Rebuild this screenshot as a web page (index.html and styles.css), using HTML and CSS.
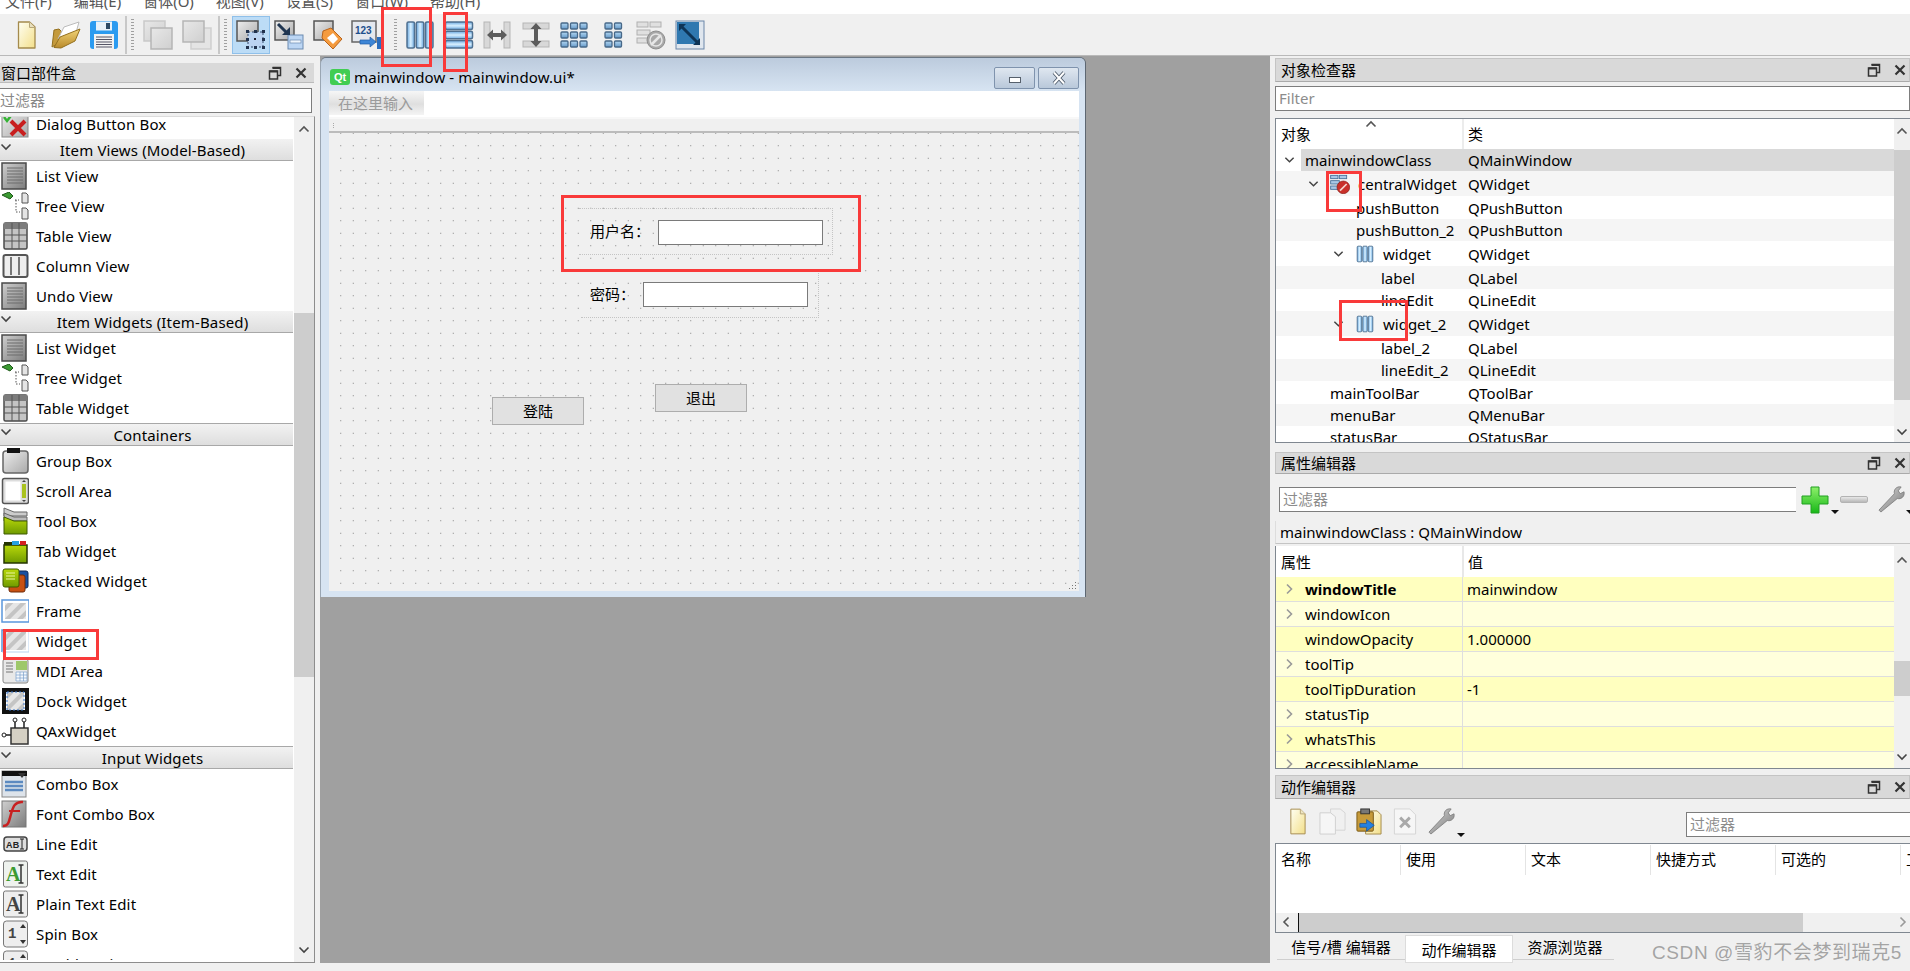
FILE: index.html
```html
<!DOCTYPE html>
<html lang="zh">
<head>
<meta charset="utf-8">
<title>Qt Designer</title>
<link rel="stylesheet" href="styles.css">
</head>
<body>
<svg class="defs" width="0" height="0" aria-hidden="true">
  <defs>
    <linearGradient id="gBlue" x1="0" y1="0" x2="1" y2="0"><stop offset="0" stop-color="#6aa8e0"/><stop offset=".5" stop-color="#d8f0ff"/><stop offset="1" stop-color="#6aa8e0"/></linearGradient>
    <linearGradient id="gBlueV" x1="0" y1="0" x2="0" y2="1"><stop offset="0" stop-color="#6aa8e0"/><stop offset=".5" stop-color="#d8f0ff"/><stop offset="1" stop-color="#6aa8e0"/></linearGradient>
    <linearGradient id="gCell" x1="0" y1="0" x2="0" y2="1"><stop offset="0" stop-color="#b4d8f2"/><stop offset="1" stop-color="#6498c8"/></linearGradient>
    <linearGradient id="gGray" x1="0" y1="0" x2="1" y2="1"><stop offset="0" stop-color="#ededed"/><stop offset="1" stop-color="#a9a9a9"/></linearGradient>
    <linearGradient id="gList" x1="0" y1="0" x2="1" y2="1"><stop offset="0" stop-color="#cfcfcf"/><stop offset="1" stop-color="#7c7c7c"/></linearGradient>
    <linearGradient id="gPale" x1="0" y1="0" x2="1" y2="1"><stop offset="0" stop-color="#e8e8e8"/><stop offset="1" stop-color="#cfcfcf"/></linearGradient>
    <linearGradient id="gGreen" x1="0" y1="0" x2="0" y2="1"><stop offset="0" stop-color="#b9d80a"/><stop offset="1" stop-color="#6f9a00"/></linearGradient>
    <linearGradient id="gFile" x1="0" y1="0" x2="1" y2="1"><stop offset="0" stop-color="#fffff2"/><stop offset="1" stop-color="#f3df8a"/></linearGradient>
    <linearGradient id="gGold" x1="0" y1="0" x2="0" y2="1"><stop offset="0" stop-color="#f2d478"/><stop offset="1" stop-color="#b98a2a"/></linearGradient>
    <linearGradient id="gPlus" x1="0" y1="0" x2="0" y2="1"><stop offset="0" stop-color="#8df06a"/><stop offset="1" stop-color="#18b818"/></linearGradient>
    <linearGradient id="gSteel" x1="0" y1="0" x2="1" y2="1"><stop offset="0" stop-color="#dcdcdc"/><stop offset="1" stop-color="#767676"/></linearGradient>
    <pattern id="hatch" width="9" height="9" patternUnits="userSpaceOnUse" patternTransform="rotate(-45)"><rect width="9" height="9" fill="#e6e6e6"/><rect width="9" height="4" fill="#c4c4c4"/></pattern>

    <symbol id="chevD" viewBox="0 0 12 8"><path d="M1.5 1.5 6 6l4.500-4.500" fill="none" stroke="#444" stroke-width="1.600"/></symbol>
    <symbol id="chevU" viewBox="0 0 12 8"><path d="M1.500 6.500 6 2l4.500 4.500" fill="none" stroke="#555" stroke-width="1.600"/></symbol>
    <symbol id="chevR" viewBox="0 0 8 12"><path d="M1.500 1.500 6 6l-4.500 4.500" fill="none" stroke="#999" stroke-width="1.600"/></symbol>
    <symbol id="chevL" viewBox="0 0 8 12"><path d="M6.500 1.500 2 6l4.500 4.500" fill="none" stroke="#555" stroke-width="1.600"/></symbol>
    <symbol id="float" viewBox="0 0 14 14"><path d="M4.500 1.500h8v8h-3M1.500 5h8v8h-8z" fill="none" stroke="#333" stroke-width="1.500"/><path d="M4.500 1h8v2h-8zM1.500 4.500h8v2h-8z" fill="#333"/></symbol>
    <symbol id="close" viewBox="0 0 12 12"><path d="M1.500 1.500l9 9m0-9-9 9" stroke="#333" stroke-width="2.200"/></symbol>

    <symbol id="new" viewBox="0 0 30 30"><path d="M6.500 2h11l5.500 5v21H6.500z" fill="url(#gFile)" stroke="#a48a4c" stroke-width="1.300" stroke-linejoin="round"/><path d="M17.500 2v5.500H23" fill="#e8e0c0" stroke="#b8a878"/></symbol>
    <symbol id="open" viewBox="0 0 30 30"><path d="M1 27 3 10l5-1 3 3 10-2v6z" fill="#c49a3c" stroke="#94701e"/><path d="M7 19 13 7l15-5-4 14z" fill="#fff" stroke="#bbb"/><path d="M3 27.500 9 17l20-8-5 12-14 7z" fill="url(#gGold)" stroke="#94701e"/></symbol>
    <symbol id="save" viewBox="0 0 30 30"><rect x="1" y="1" width="28" height="28" rx="3" fill="#2b9bf0"/><rect x="7" y="1.500" width="16" height="9" fill="#e8f2fa"/><rect x="17" y="3" width="4" height="6" fill="#2c4a66"/><rect x="5" y="14" width="20" height="15" fill="#f2f2f2"/><path d="M7 17h16M7 19.500h16M7 22h16M7 24.500h16M7 27h16" stroke="#556" stroke-width="1"/></symbol>
    <symbol id="copy" viewBox="0 0 30 30"><rect x="1" y="1" width="21" height="20" fill="url(#gPale)" stroke="#c9c9c9" stroke-width="1.500"/><rect x="8" y="8" width="21" height="21" fill="url(#gPale)" stroke="#b5b5b5" stroke-width="1.500"/></symbol>
    <symbol id="paste" viewBox="0 0 30 30"><rect x="9" y="8" width="20" height="21" fill="#e4e4e4" stroke="#cfcfcf" stroke-width="1.500"/><rect x="1" y="1" width="21" height="21" fill="url(#gPale)" stroke="#b5b5b5" stroke-width="1.500"/></symbol>
    <symbol id="edit" viewBox="0 0 30 30"><rect x="1" y="1" width="21" height="20" fill="url(#gGray)" stroke="#555" stroke-width="1.500"/><rect x="12" y="12" width="15" height="15" fill="#bcd4f2" stroke="#33496a" stroke-dasharray="2 2"/><rect x="18" y="18" width="2" height="2" fill="#223"/><path d="M10 10h3v3h-3zM18 10h3v3h-3zM26 10h3v3h-3zM26 18h3v3h-3zM26 26h3v3h-3zM18 26h3v3h-3zM10 26h3v3h-3zM10 18h3v3h-3z" fill="#23334e"/></symbol>
    <symbol id="signal" viewBox="0 0 30 30"><rect x="1" y="1" width="19" height="19" fill="url(#gGray)" stroke="#555" stroke-width="1.500"/><rect x="14" y="15" width="15" height="14" fill="#bcd6f4" stroke="#6a8ab0"/><rect x="16" y="20" width="11" height="3" fill="#eef5fc" stroke="#6a8ab0" stroke-width=".7"/><path d="M4 4l10 10" stroke="#1f3550" stroke-width="3"/><path d="M8 15h8V7z" fill="#1f3550"/></symbol>
    <symbol id="buddy" viewBox="0 0 30 30"><rect x="1" y="1" width="19" height="19" fill="url(#gGray)" stroke="#555" stroke-width="1.500"/><path d="M10 11 18 8 29 19l-9 10L9 18z" fill="#f59b3e" stroke="#b9641c"/><path d="M20 13l5 6-5 5-6-6z" fill="#fff"/></symbol>
    <symbol id="taborder" viewBox="0 0 30 30"><rect x="1" y="1" width="24" height="21" fill="#e4e8ee" stroke="#666" stroke-width="1.500"/><text x="4" y="14" class="svgtxt">123</text><path d="M9 20h10v-3l6 5-6 5v-3H9z" fill="#3e86d6" stroke="#1f5da8" stroke-width=".7"/><rect x="26" y="17" width="4" height="12" fill="#2a6fc0"/></symbol>
    <symbol id="hlay" viewBox="0 0 30 30"><g fill="url(#gBlue)" stroke="#4f7090" stroke-width="1.500"><rect x="2" y="2" width="7.500" height="26" rx="1.500"/><rect x="11.300" y="2" width="7.500" height="26" rx="1.500"/><rect x="20.500" y="2" width="7.500" height="26" rx="1.500"/></g></symbol>
    <symbol id="vlay" viewBox="0 0 30 30"><g fill="url(#gBlueV)" stroke="#4f7090" stroke-width="1.500"><rect x="1.500" y="2" width="27" height="7.500" rx="1.500"/><rect x="1.500" y="11.300" width="27" height="7.500" rx="1.500"/><rect x="1.500" y="20.500" width="27" height="7.500" rx="1.500"/></g></symbol>
    <symbol id="splith" viewBox="0 0 30 30"><rect x="2" y="2" width="6" height="26" fill="#d8d8d8" stroke="#b5b5b5"/><rect x="22" y="2" width="6" height="26" fill="#d8d8d8" stroke="#b5b5b5"/><path d="M5 15l6-5.500V13h8V9.500l6 5.500-6 5.500V17h-8v3.500z" fill="#5c5c5c"/></symbol>
    <symbol id="splitv" viewBox="0 0 30 30"><rect x="2" y="3" width="26" height="6" fill="#d8d8d8" stroke="#b5b5b5"/><rect x="2" y="21" width="26" height="6" fill="#d8d8d8" stroke="#b5b5b5"/><path d="M15 3l5.500 6H17v12h3.500L15 27l-5.500-6H13V9H9.500z" fill="#5c5c5c"/></symbol>
    <symbol id="grid" viewBox="0 0 30 30"><g fill="url(#gCell)" stroke="#476888" stroke-width="1.300"><rect x="2" y="3" width="7" height="6" rx="1"/><rect x="11.500" y="3" width="7" height="6" rx="1"/><rect x="21" y="3" width="7" height="6" rx="1"/><rect x="2" y="12" width="7" height="6" rx="1"/><rect x="11.500" y="12" width="7" height="6" rx="1"/><rect x="21" y="12" width="7" height="6" rx="1"/><rect x="2" y="21" width="7" height="6" rx="1"/><rect x="11.500" y="21" width="7" height="6" rx="1"/><rect x="21" y="21" width="7" height="6" rx="1"/></g></symbol>
    <symbol id="form" viewBox="0 0 30 30"><g fill="url(#gCell)" stroke="#476888" stroke-width="1.300"><rect x="7" y="3" width="7" height="6" rx="1"/><rect x="16.500" y="3" width="7" height="6" rx="1"/><rect x="7" y="12" width="7" height="6" rx="1"/><rect x="16.500" y="12" width="7" height="6" rx="1"/><rect x="7" y="21" width="7" height="6" rx="1"/><rect x="16.500" y="21" width="7" height="6" rx="1"/></g></symbol>
    <symbol id="break" viewBox="0 0 30 30"><g fill="#e0e0e0" stroke="#b0b0b0"><rect x="1" y="2" width="11" height="5"/><rect x="14" y="2" width="11" height="5"/><rect x="1" y="10" width="13" height="5"/><rect x="1" y="18" width="13" height="5"/></g><circle cx="20" cy="20" r="9" fill="#a8a8a8" stroke="#8d8d8d"/><path d="M15 25l10-10" stroke="#e6e6e6" stroke-width="2.500"/><circle cx="20" cy="20" r="6" fill="none" stroke="#e6e6e6" stroke-width="1.500"/></symbol>
    <symbol id="breakred" viewBox="0 0 30 30"><g fill="#a9c8e6" stroke="#456d96" stroke-width="1.300"><rect x="1" y="2" width="11" height="5"/><rect x="14" y="2" width="11" height="5"/><rect x="1" y="10" width="13" height="5"/><rect x="1" y="18" width="13" height="5"/></g><circle cx="20" cy="20" r="9.500" fill="#c9302a" stroke="#8a1c18"/><path d="M15 25l10-10" stroke="#f6d8d0" stroke-width="2.500"/></symbol>
    <symbol id="adjust" viewBox="0 0 30 30"><rect x="1" y="1" width="28" height="28" fill="#dfe6ee" stroke="#6a86a8"/><rect x="2" y="2" width="22" height="22" fill="#2f78b0"/><path d="M6 6l17 17" stroke="#0e3456" stroke-width="3"/><path d="M4 11V4h7zM25 18v7h-7z" fill="#0e3456"/></symbol>

    <symbol id="i-dialog" viewBox="0 0 28 28"><rect x="1" y="1" width="26" height="26" fill="url(#gGray)" stroke="#888"/><path d="M3 7l3 4 6-8" fill="none" stroke="#34b334" stroke-width="2.500"/><path d="M10 11l14 14m0-14L10 25" stroke="#c81e1e" stroke-width="4"/></symbol>
    <symbol id="i-list" viewBox="0 0 28 28"><rect x="1" y="1" width="24" height="26" fill="url(#gList)" stroke="#4a4a4a" stroke-width="1.500"/><path d="M6 6h16M6 9h16M6 12h16M6 15h16M6 18h16M6 21h16" stroke="#6c6c6c"/></symbol>
    <symbol id="i-tree" viewBox="0 0 28 28"><path d="M1 3l7-3 4 4-3 3z" fill="#3b9a32" stroke="#1f5a1a"/><path d="M14 8h4M15 8v12h4" fill="none" stroke="#555" stroke-dasharray="1.500 1.500"/><path d="M21 1h4l2 2v8h-6zM21 16h4l2 2v9h-6z" fill="#e4e4e4" stroke="#555"/></symbol>
    <symbol id="i-table" viewBox="0 0 28 28"><rect x="3" y="1" width="23" height="26" rx="1.500" fill="#c4c4c4" stroke="#4a4a4a" stroke-width="1.500"/><rect x="3" y="1" width="23" height="6" fill="#7c7c7c"/><path d="M3 13h23M3 19h23M11 1v26M18 1v26" stroke="#555"/></symbol>
    <symbol id="i-column" viewBox="0 0 28 28"><rect x="2.500" y="3" width="24" height="22" rx="2" fill="#eee" stroke="#555" stroke-width="2"/><path d="M10 5v18M18 5v18" stroke="#777" stroke-width="2"/></symbol>
    <symbol id="i-group" viewBox="0 0 28 28"><rect x="2" y="4" width="25" height="22" rx="3" fill="url(#gGray)" stroke="#666" stroke-width="1.500"/><rect x="6" y="1" width="13" height="5" fill="#111"/></symbol>
    <symbol id="i-scroll" viewBox="0 0 28 28"><rect x="1.500" y="1.500" width="26" height="25" rx="2" fill="#ddd" stroke="#555" stroke-width="1.500"/><rect x="4.500" y="4.500" width="15" height="19" fill="#fff"/><rect x="21" y="7" width="4" height="14" fill="#a9c21e"/><path d="M21 5h4l-2-2zM21 23h4l-2 2z" fill="#444"/></symbol>
    <symbol id="i-toolbox" viewBox="0 0 28 28"><path d="M3 1l10 4h13v4H3z" fill="#ccc" stroke="#666"/><path d="M3 6l10 4h13v4H3z" fill="#bbb" stroke="#666"/><path d="M3 10l10 4h13v13H3z" fill="url(#gGreen)" stroke="#3f5a00"/></symbol>
    <symbol id="i-tab" viewBox="0 0 28 28"><rect x="3" y="8" width="23" height="18" fill="url(#gGreen)" stroke="#253400" stroke-width="1.500"/><rect x="11" y="4" width="7" height="4" fill="#27a0e0"/><rect x="19" y="4" width="6" height="4" fill="#d42020"/><rect x="3" y="5" width="8" height="3" fill="#253400"/></symbol>
    <symbol id="i-stack" viewBox="0 0 28 28"><rect x="14" y="4" width="13" height="17" rx="2" fill="#1a4fa0" stroke="#102a58"/><rect x="8" y="8" width="16" height="17" rx="2" fill="#c85012" stroke="#6e2a08"/><rect x="2" y="2" width="16" height="18" rx="2" fill="url(#gGreen)" stroke="#3f5a00"/><path d="M5 6h9M5 9h9M5 12h9" stroke="#eaf6a0"/></symbol>
    <symbol id="i-frame" viewBox="0 0 28 28"><rect x="1" y="3" width="27" height="22" fill="#fff" stroke="#5a96dc" stroke-width="1.500"/><rect x="4" y="6" width="21" height="16" fill="url(#hatch)"/></symbol>
    <symbol id="i-widget" viewBox="0 0 28 28"><path d="M1 25V3h5" fill="none" stroke="#5a96dc" stroke-width="1.500"/><path d="M1 25h27V3H6" fill="none" stroke="#b8d2ee"/><rect x="4" y="5" width="21" height="18" fill="url(#hatch)"/></symbol>
    <symbol id="i-mdi" viewBox="0 0 28 28"><rect x="2" y="2" width="25" height="24" rx="2" fill="#e8e8e8" stroke="#888"/><rect x="15" y="4" width="11" height="9" fill="#9ec86a"/><path d="M15 15h11v9H15zM15 18h11M15 21h11M19 15v9M22.500 15v9" fill="#f4f8fc" stroke="#7ba0cc" stroke-width=".7"/><path d="M5 6h7M5 9h7M5 12h7M5 15h7" stroke="#777"/></symbol>
    <symbol id="i-dock" viewBox="0 0 28 28"><rect x="1" y="1" width="27" height="4" fill="#111"/><rect x="1" y="23" width="27" height="4" fill="#111"/><rect x="1" y="5" width="4" height="18" fill="#111"/><rect x="24" y="5" width="4" height="18" fill="#111"/><rect x="6" y="5" width="17" height="18" fill="url(#hatch)" stroke="#3a78d0" stroke-dasharray="2 2"/></symbol>
    <symbol id="i-qax" viewBox="0 0 28 28"><rect x="10" y="11" width="17" height="16" fill="#d5d0c4" stroke="#333" stroke-width="1.500"/><path d="M14 11V4M23 11V4M1 18h9" stroke="#222" stroke-width="1.500"/><circle cx="14" cy="3" r="2" fill="#fff" stroke="#222"/><circle cx="23" cy="3" r="2" fill="#fff" stroke="#222"/><circle cx="3" cy="18" r="2" fill="#fff" stroke="#222"/></symbol>
    <symbol id="i-combo" viewBox="0 0 28 28"><rect x="1" y="1" width="24" height="26" fill="#dde3ea" stroke="#888"/><rect x="1" y="1" width="25" height="5" fill="#111"/><path d="M17 3h8l-4 5z" fill="#333"/><path d="M4 12h18M4 16h18M4 20h18" stroke="#5c8ac0" stroke-width="2.500"/></symbol>
    <symbol id="i-font" viewBox="0 0 28 28"><rect x="1" y="1" width="24" height="26" fill="url(#gList)" stroke="#777"/><path d="M2 26c6 0 6-5 8-12s4-13 12-12" fill="none" stroke="#c82020" stroke-width="2.500"/><path d="M8 11h11" stroke="#c82020" stroke-width="2"/></symbol>
    <symbol id="i-line" viewBox="0 0 28 28"><rect x="3" y="7" width="23" height="14" rx="3" fill="#ddd" stroke="#444" stroke-width="1.500"/><text x="5" y="18" class="svgtxt svgbold">AB</text><path d="M21 9v10M19 9h4M19 19h4" stroke="#222"/></symbol>
    <symbol id="i-text" viewBox="0 0 28 28"><rect x="2.500" y="1" width="24" height="26" rx="2" fill="#eef2ee" stroke="#777"/><text x="5" y="21" class="svgserif svggreen">A</text><path d="M20 5v18M17.500 5h5M17.500 23h5" stroke="#333" stroke-width="1.500"/></symbol>
    <symbol id="i-plain" viewBox="0 0 28 28"><rect x="2.500" y="1" width="24" height="26" rx="2" fill="#eee" stroke="#777"/><text x="5" y="21" class="svgserif">A</text><path d="M20 5v18M17.500 5h5M17.500 23h5" stroke="#333" stroke-width="1.500"/></symbol>
    <symbol id="i-spin" viewBox="0 0 28 28"><rect x="2.500" y="1" width="24" height="26" rx="3" fill="#eee" stroke="#777"/><text x="7" y="18" class="svgnum">1</text><path d="M19 8h6l-3-4zM19 20h6l-3 4z" fill="#333"/></symbol>
  </defs>
</svg>

<div class="app">
  <nav class="menubar">
    <span>文件(F)</span><span>编辑(E)</span><span>窗体(O)</span><span>视图(V)</span><span>设置(S)</span><span>窗口(W)</span><span>帮助(H)</span>
  </nav>

  <div class="toolbar">
    <button class="tool"><svg class="tb"><use href="#new"/></svg></button>
    <button class="tool"><svg class="tb"><use href="#open"/></svg></button>
    <button class="tool"><svg class="tb"><use href="#save"/></svg></button>
    <i class="sep"></i><i class="handle"></i>
    <button class="tool"><svg class="tb"><use href="#copy"/></svg></button>
    <button class="tool"><svg class="tb"><use href="#paste"/></svg></button>
    <i class="sep"></i><i class="handle"></i>
    <button class="tool active"><svg class="tb"><use href="#edit"/></svg></button>
    <button class="tool"><svg class="tb"><use href="#signal"/></svg></button>
    <button class="tool"><svg class="tb"><use href="#buddy"/></svg></button>
    <button class="tool"><svg class="tb"><use href="#taborder"/></svg></button>
    <i class="handle handle-solo"></i>
    <button class="tool"><svg class="tb"><use href="#hlay"/></svg></button>
    <button class="tool"><svg class="tb"><use href="#vlay"/></svg></button>
    <button class="tool"><svg class="tb"><use href="#splith"/></svg></button>
    <button class="tool"><svg class="tb"><use href="#splitv"/></svg></button>
    <button class="tool"><svg class="tb"><use href="#grid"/></svg></button>
    <button class="tool"><svg class="tb"><use href="#form"/></svg></button>
    <button class="tool"><svg class="tb"><use href="#break"/></svg></button>
    <button class="tool"><svg class="tb"><use href="#adjust"/></svg></button>
  </div>

  <main class="workspace">
    <aside class="left-dock">
      <header class="dock-head left-head"><span>窗口部件盒</span><span class="dock-btns"><svg class="ic-float"><use href="#float"/></svg><svg class="ic-close"><use href="#close"/></svg></span></header>
      <div class="left-filter">过滤器</div>
      <div class="box-list">
        <div class="box-items">
          <div class="box-row clip-first"><svg class="wi"><use href="#i-dialog"/></svg>Dialog Button Box</div>
          <div class="box-hd"><svg class="chev"><use href="#chevD"/></svg><span>Item Views (Model-Based)</span></div>
          <div class="box-row"><svg class="wi"><use href="#i-list"/></svg>List View</div>
          <div class="box-row"><svg class="wi"><use href="#i-tree"/></svg>Tree View</div>
          <div class="box-row"><svg class="wi"><use href="#i-table"/></svg>Table View</div>
          <div class="box-row"><svg class="wi"><use href="#i-column"/></svg>Column View</div>
          <div class="box-row"><svg class="wi"><use href="#i-list"/></svg>Undo View</div>
          <div class="box-hd"><svg class="chev"><use href="#chevD"/></svg><span>Item Widgets (Item-Based)</span></div>
          <div class="box-row"><svg class="wi"><use href="#i-list"/></svg>List Widget</div>
          <div class="box-row"><svg class="wi"><use href="#i-tree"/></svg>Tree Widget</div>
          <div class="box-row"><svg class="wi"><use href="#i-table"/></svg>Table Widget</div>
          <div class="box-hd tall"><svg class="chev"><use href="#chevD"/></svg><span>Containers</span></div>
          <div class="box-row"><svg class="wi"><use href="#i-group"/></svg>Group Box</div>
          <div class="box-row"><svg class="wi"><use href="#i-scroll"/></svg>Scroll Area</div>
          <div class="box-row"><svg class="wi"><use href="#i-toolbox"/></svg>Tool Box</div>
          <div class="box-row"><svg class="wi"><use href="#i-tab"/></svg>Tab Widget</div>
          <div class="box-row"><svg class="wi"><use href="#i-stack"/></svg>Stacked Widget</div>
          <div class="box-row"><svg class="wi"><use href="#i-frame"/></svg>Frame</div>
          <div class="box-row"><svg class="wi"><use href="#i-widget"/></svg>Widget</div>
          <div class="box-row"><svg class="wi"><use href="#i-mdi"/></svg>MDI Area</div>
          <div class="box-row"><svg class="wi"><use href="#i-dock"/></svg>Dock Widget</div>
          <div class="box-row"><svg class="wi"><use href="#i-qax"/></svg>QAxWidget</div>
          <div class="box-hd tall"><svg class="chev"><use href="#chevD"/></svg><span>Input Widgets</span></div>
          <div class="box-row"><svg class="wi"><use href="#i-combo"/></svg>Combo Box</div>
          <div class="box-row"><svg class="wi"><use href="#i-font"/></svg>Font Combo Box</div>
          <div class="box-row"><svg class="wi"><use href="#i-line"/></svg>Line Edit</div>
          <div class="box-row"><svg class="wi"><use href="#i-text"/></svg>Text Edit</div>
          <div class="box-row"><svg class="wi"><use href="#i-plain"/></svg>Plain Text Edit</div>
          <div class="box-row"><svg class="wi"><use href="#i-spin"/></svg>Spin Box</div>
          <div class="box-row"><svg class="wi"><use href="#i-spin"/></svg>Double Spin Box</div>
        </div>
        <div class="vbar box-bar">
          <svg class="bar-up"><use href="#chevU"/></svg>
          <div class="bar-thumb"></div>
          <svg class="bar-down"><use href="#chevD"/></svg>
        </div>
      </div>
    </aside>

    <section class="mdi">
      <div class="subwin">
        <div class="sub-title">
          <span class="qt-logo">Qt</span>
          <span class="sub-text">mainwindow - mainwindow.ui*</span>
          <span class="win-btn"><i class="min-glyph"></i></span>
          <span class="win-btn"><svg class="x-glyph" viewBox="0 0 14 14"><path d="M2 1.500 12 12.500M12 1.500 2 12.500" stroke="#4d5a6a" stroke-width="3.800"/><path d="M2 1.500 12 12.500M12 1.500 2 12.500" stroke="#fff" stroke-width="2"/></svg></span>
        </div>
        <div class="form-menu"><span class="form-menu-item">在这里输入</span></div>
        <div class="form-tool"><i class="form-grip"></i></div>
        <div class="form">
          <div class="dotbox dot1"></div>
          <div class="dotbox dot2"></div>
          <label class="flabel l1">用户名：</label>
          <div class="fedit e1"></div>
          <label class="flabel l2">密码：</label>
          <div class="fedit e2"></div>
          <div class="fbtn b1">登陆</div>
          <div class="fbtn b2">退出</div>
          <svg class="grip" viewBox="0 0 9 9"><path d="M7 1h1v1H7zM4 4h1v1H4zM7 4h1v1H7zM1 7h1v1H1zM4 7h1v1H4zM7 7h1v1H7z" fill="#777"/></svg>
        </div>
      </div>
    </section>

    <aside class="right-dock">
      <header class="dock-head r1"><span>对象检查器</span><span class="dock-btns"><svg class="ic-float"><use href="#float"/></svg><svg class="ic-close"><use href="#close"/></svg></span></header>
      <div class="ph-input r-filter">Filter</div>
      <div class="tree">
        <div class="tree-main">
          <div class="t-head"><span class="col1">对象<svg class="sort"><use href="#chevU"/></svg></span><span class="col2">类</span></div>
          <div class="t-row selected"><span class="name p0"><svg class="ar"><use href="#chevD"/></svg>mainwindowClass</span><span class="val">QMainWindow</span></div>
          <div class="t-row alt h25"><span class="name p1"><svg class="ar"><use href="#chevD"/></svg><svg class="ti ti20"><use href="#breakred"/></svg>centralWidget</span><span class="val">QWidget</span></div>
          <div class="t-row h23"><span class="name p2">pushButton</span><span class="val">QPushButton</span></div>
          <div class="t-row alt"><span class="name p2">pushButton_2</span><span class="val">QPushButton</span></div>
          <div class="t-row h25"><span class="name p3"><svg class="ar"><use href="#chevD"/></svg><svg class="ti"><use href="#hlay"/></svg>widget</span><span class="val">QWidget</span></div>
          <div class="t-row alt h23"><span class="name p4">label</span><span class="val">QLabel</span></div>
          <div class="t-row"><span class="name p4">lineEdit</span><span class="val">QLineEdit</span></div>
          <div class="t-row alt h25"><span class="name p3"><svg class="ar"><use href="#chevD"/></svg><svg class="ti"><use href="#hlay"/></svg>widget_2</span><span class="val">QWidget</span></div>
          <div class="t-row h23"><span class="name p4">label_2</span><span class="val">QLabel</span></div>
          <div class="t-row alt"><span class="name p4">lineEdit_2</span><span class="val">QLineEdit</span></div>
          <div class="t-row h23"><span class="name p5">mainToolBar</span><span class="val">QToolBar</span></div>
          <div class="t-row alt"><span class="name p5">menuBar</span><span class="val">QMenuBar</span></div>
          <div class="t-row"><span class="name p5">statusBar</span><span class="val">QStatusBar</span></div>
        </div>
        <div class="vbar tree-bar">
          <svg class="bar-up"><use href="#chevU"/></svg>
          <div class="bar-thumb"></div>
          <svg class="bar-down"><use href="#chevD"/></svg>
        </div>
      </div>

      <header class="dock-head r2"><span>属性编辑器</span><span class="dock-btns"><svg class="ic-float"><use href="#float"/></svg><svg class="ic-close"><use href="#close"/></svg></span></header>
      <div class="prop-tools">
        <div class="ph-input prop-filter">过滤器</div>
        <svg class="plus" viewBox="0 0 28 28"><path d="M10 1h8v9h9v8h-9v9h-8v-9H1v-8h9z" fill="url(#gPlus)" stroke="#20a020"/></svg>
        <i class="drop d-plus"></i>
        <i class="minus"></i>
        <svg class="wrench" viewBox="0 0 28 28"><path d="M3 27 1 25 17 8c-1-4 2-8 7-7l-3 4 2 3 4-2c1 5-3 8-7 7z" fill="url(#gSteel)" stroke="#777" stroke-width=".8"/></svg>
        <i class="drop d-wrench"></i>
      </div>
      <div class="class-line">mainwindowClass : QMainWindow</div>
      <div class="props">
        <div class="tree-main">
          <div class="p-head"><span class="col1">属性</span><span class="col2">值</span></div>
          <div class="p-row dark"><span class="pn"><svg class="par"><use href="#chevR"/></svg><b>windowTitle</b></span><span class="pv">mainwindow</span></div>
          <div class="p-row"><span class="pn"><svg class="par"><use href="#chevR"/></svg>windowIcon</span><span class="pv"></span></div>
          <div class="p-row dark"><span class="pn noarrow">windowOpacity</span><span class="pv">1.000000</span></div>
          <div class="p-row"><span class="pn"><svg class="par"><use href="#chevR"/></svg>toolTip</span><span class="pv"></span></div>
          <div class="p-row dark"><span class="pn noarrow">toolTipDuration</span><span class="pv">-1</span></div>
          <div class="p-row"><span class="pn"><svg class="par"><use href="#chevR"/></svg>statusTip</span><span class="pv"></span></div>
          <div class="p-row dark"><span class="pn"><svg class="par"><use href="#chevR"/></svg>whatsThis</span><span class="pv"></span></div>
          <div class="p-row"><span class="pn"><svg class="par"><use href="#chevR"/></svg>accessibleName</span><span class="pv"></span></div>
        </div>
        <div class="vbar prop-bar">
          <svg class="bar-up"><use href="#chevU"/></svg>
          <div class="bar-thumb"></div>
          <svg class="bar-down"><use href="#chevD"/></svg>
        </div>
      </div>

      <header class="dock-head r3"><span>动作编辑器</span><span class="dock-btns"><svg class="ic-float"><use href="#float"/></svg><svg class="ic-close"><use href="#close"/></svg></span></header>
      <div class="act-tools">
        <svg class="ai a1" viewBox="0 0 20 28"><path d="M3 1h10l5 5v21H3z" fill="url(#gFile)" stroke="#a48a4c"/><path d="M13 1v5h5" fill="#eee6c4" stroke="#b8a878"/></svg>
        <svg class="ai a2" viewBox="0 0 28 28"><path d="M12 1h10l5 4v18H12z" fill="#f0f0f0" stroke="#d4d4d4"/><path d="M1 5h11l5 4v18H1z" fill="#f6f6f6" stroke="#cfcfcf"/></svg>
        <svg class="ai a3" viewBox="0 0 28 28"><path d="M11 3h12l4 4v20H11z" fill="url(#gFile)" stroke="#a48a4c"/><rect x="2" y="4" width="17" height="20" rx="1" fill="#c69a3a" stroke="#7a5a16"/><rect x="6" y="1" width="9" height="5" fill="#777" stroke="#333"/><path d="M5 16h7v-4l8 6-8 6v-4H5z" fill="#2480e0" stroke="#14509a" stroke-width=".7"/></svg>
        <svg class="ai a4" viewBox="0 0 24 28"><path d="M1 1h16l6 6v20H1z" fill="#f6f6f6" stroke="#d4d4d4"/><path d="M7 10l10 10m0-10L7 20" stroke="#a9a9a9" stroke-width="3"/></svg>
        <svg class="ai a5" viewBox="0 0 28 28"><path d="M3 27 1 25 17 8c-1-4 2-8 7-7l-3 4 2 3 4-2c1 5-3 8-7 7z" fill="url(#gSteel)" stroke="#777" stroke-width=".8"/></svg>
        <i class="drop d-act"></i>
        <div class="ph-input act-filter">过滤器</div>
      </div>
      <div class="act-table">
        <div class="act-head"><span>名称</span><span>使用</span><span>文本</span><span>快捷方式</span><span>可选的</span><span>工</span></div>
        <div class="act-body"></div>
        <div class="hbar">
          <svg class="hb-left"><use href="#chevL"/></svg>
          <div class="hb-thumb"></div>
          <svg class="hb-right"><use href="#chevR"/></svg>
        </div>
      </div>
      <div class="tabs">
        <span class="tab t1">信号/槽 编辑器</span>
        <span class="tab active">动作编辑器</span>
        <span class="tab t3">资源浏览器</span>
      </div>
    </aside>
  </main>

  <i class="mark m1"></i>
  <i class="mark m2"></i>
  <i class="mark m3"></i>
  <i class="mark m4"></i>
  <i class="mark m5"></i>
  <i class="mark m6"></i>
  <div class="watermark">CSDN @雪豹不会梦到瑞克5</div>
</div>
</body>
</html>
```
FILE: styles.css
```css
* { box-sizing: border-box; }
html, body { margin: 0; padding: 0; height: 100%; overflow: hidden; }
body {
  background: #f0f0f0;
  color: #000;
  font: 15px/1.2 "Noto Sans", "Noto Sans CJK SC", sans-serif;
}
.defs { position: absolute; }
.svgtxt { font: 10px "Liberation Sans", sans-serif; fill: #1c4f8c; font-weight: 700; }
.svgbold { fill: #222; font-size: 9px; }
.svgserif { font: 700 20px "Liberation Serif", serif; fill: #444; }
.svggreen { fill: #3b9a32; }
.svgnum { font: 700 14px "Liberation Mono", monospace; fill: #444; }

.app { position: relative; width: 1910px; height: 971px; overflow: hidden; }

/* menu */
.menubar { height: 14px; background: #fff; display: flex; overflow: hidden; padding-left: 5px; gap: 22px; color: #555; line-height: 16px; }
.menubar span { margin-top: -7px; white-space: nowrap; }

/* toolbar */
.toolbar { height: 42px; display: flex; align-items: center; padding: 0 0 0 8px; background: #f0f0f0; border-bottom: 1px solid #b9b9b9; }
.tool { width: 38.500px; height: 38px; border: 0; padding: 0; background: transparent; display: flex; align-items: center; justify-content: center; flex: none; }
.tool.active { background: #bcdcf6; border: 1px solid #8fc0ea; }
.tb { width: 30px; height: 30px; display: block; flex: none; }
.sep { width: 2px; height: 38px; background: #c8c8c8; flex: none; margin: 0 4px 0 1.500px; }
.handle { width: 3px; height: 32px; flex: none; margin-right: 5px; background: repeating-linear-gradient(to bottom, #a0a0a0 0 1px, transparent 1px 3px); }
.handle-solo { margin-left: 8px; margin-right: 4.500px; }

/* workspace */
.workspace { display: flex; height: 915px; }

/* docks */
.dock-head { display: flex; align-items: center; justify-content: space-between; background: #d9d9d9; border: 1px solid #c4c4c4; border-bottom-color: #aaa; padding: 0 3px 0 5px; height: 24px; }
.dock-btns { display: flex; align-items: center; gap: 13px; }
.ic-float { width: 14px; height: 14px; }
.ic-close { width: 12px; height: 12px; }

/* left */
.left-dock { width: 320px; flex: none; display: flex; flex-direction: column; }
.left-head { width: 314px; height: 20px; margin-top: 7px; padding: 0 7px 0 1px; border: 0; border-bottom: 1px solid #bbb; }
.left-filter { width: 312px; height: 25px; margin-top: 5px; background: #fff; border: 1px solid #7d7d7d; border-left: 0; color: #888; line-height: 23px; }
.box-list { width: 315px; height: 847px; margin-top: 3px; background: #fff; border: 1px solid #8d8d8d; border-width: 1px 1px 1px 0; border-top-color: #dcdcdc; display: flex; overflow: hidden; }
.box-items { width: 293px; flex: none; height: 100%; overflow: hidden; margin-top: -2px; }
.box-row { height: 30px; display: flex; align-items: center; gap: 7px; padding-left: 1px; white-space: nowrap; font-size: 15px; letter-spacing: .15px; }
.clip-first { margin-top: -6px; }
.wi { width: 28px; height: 28px; flex: none; }
.box-hd { height: 22px; position: relative; display: flex; align-items: center; justify-content: center; padding-left: 12px; background: linear-gradient(#f2f2f2, #dedede); border-bottom: 1px solid #a8a8a8; font-size: 15px; letter-spacing: .15px; }
.box-hd.tall { height: 23px; border-top: 1px solid #a8a8a8; }
.chev { position: absolute; left: 0; top: 4px; width: 12px; height: 8px; }
.vbar { flex: none; background: #f0f0f0; display: flex; flex-direction: column; position: relative; }
.bar-up, .bar-down { width: 12px; height: 8px; position: absolute; left: 50%; margin-left: -6px; }
.box-bar { width: 20px; margin-left: 1px; }
.box-bar .bar-up { top: 8px; }
.box-bar .bar-down { bottom: 8px; }
.box-bar .bar-thumb { margin-top: 196px; height: 364px; background: #cdcdcd; }

/* mdi */
.mdi { width: 950px; flex: none; height: 907px; background: #a0a0a0; position: relative; }
.subwin { position: absolute; left: 1px; top: 2px; width: 764px; height: 539px; background: linear-gradient(#bccbdd 0, #d7e4f2 33px, #d7e4f2 100%); border-radius: 5px 5px 0 0; padding: 0 6px 6px 8px; display: flex; flex-direction: column; box-shadow: 1px 0 0 #5d6772, 0 -1px 0 #6a7683, -1px 0 0 #9aa6b3; }
.sub-title { height: 33px; display: flex; align-items: center; flex: none; padding: 0 0 0 1px; }
.qt-logo { width: 20px; height: 16px; margin-top: 5px; background: #41cd52; color: #fff; border-radius: 3px; font: 700 11px/16px "Liberation Sans", sans-serif; text-align: center; }
.sub-text { margin: 5px 0 0 4px; font-size: 15px; letter-spacing: .1px; flex: 1; }
.win-btn { width: 41px; height: 22px; margin: 6px 0 0 3px; border: 1px solid #7f93ad; border-radius: 2px; background: linear-gradient(#dfe7f0, #b9c8da); display: flex; align-items: center; justify-content: center; }
.min-glyph { width: 12px; height: 6px; margin-top: 5px; background: #fff; border: 1px solid #56606c; }
.x-glyph { width: 14px; height: 14px; }
.form-menu { height: 26px; flex: none; background: #fff; }
.form-menu-item { display: block; width: 95px; height: 24px; padding-left: 9px; color: #9b9b9b; line-height: 24px; background: linear-gradient(#f6f6f6, #dfdfdf 55%, #f4f4f4); }
.form-tool { height: 16px; flex: none; background: #f0f0f0; border-top: 2px solid #f8f8f8; border-bottom: 2px solid #bcbcbc; position: relative; }
.form-grip { position: absolute; left: 4px; top: 4px; width: 1px; height: 5px; background: repeating-linear-gradient(#aaa 0 1px, transparent 1px 2px); }
.form { flex: 1; position: relative; background-color: #f0f0f0; background-image: radial-gradient(circle at center, #7c7c7c .75px, transparent .85px); background-size: 12.5px 12.5px; background-position: 5.5px -6px; }
.dotbox { position: absolute; border: 1px dotted #c4c4c4; }
.dot1 { left: 250px; top: 75px; width: 254px; height: 47px; border-left: 0; }
.dot2 { left: 252px; top: 137px; width: 238px; height: 48px; border-left: 0; border-top: 0; }
.flabel { position: absolute; left: 261px; font-size: 15px; white-space: nowrap; }
.l1 { top: 89px; }
.l2 { top: 152px; }
.fedit { position: absolute; width: 165px; height: 25px; background: #fff; border: 1px solid #7a7a7a; }
.e1 { left: 329px; top: 87px; }
.e2 { left: 314px; top: 149px; }
.fbtn { position: absolute; width: 92px; height: 28px; background: #e1e1e1; border: 1px solid #adadad; text-align: center; line-height: 26px; font-size: 15px; }
.b1 { left: 163px; top: 264px; }
.b2 { left: 326px; top: 251px; }
.grip { position: absolute; right: 2px; bottom: 1px; width: 9px; height: 9px; }

/* right */
.right-dock { width: 635px; flex: none; margin-left: 5px; display: flex; flex-direction: column; }
.r1 { margin-top: 2px; }
.ph-input { background: #fff; border: 1px solid #7d7d7d; color: #8c8c8c; height: 25px; line-height: 23px; padding-left: 3px; }
.r-filter { margin-top: 4px; }
.tree { margin-top: 7px; height: 325px; background: #fff; border: 1px solid #7f8790; border-right: 0; display: flex; overflow: hidden; }
.tree-main { width: 618px; flex: none; overflow: hidden; }
.t-head { height: 30px; display: flex; align-items: center; position: relative; }
.p-head { height: 31px; display: flex; align-items: center; position: relative; }
.col1 { width: 188px; flex: none; padding-left: 5px; border-right: 2px solid #ececec; height: 100%; display: flex; align-items: center; position: relative; }
.col2 { padding-left: 4px; }
.sort { position: absolute; left: 89px; top: 1px; width: 12px; height: 8px; }
.t-row { height: 22px; display: flex; align-items: center; white-space: nowrap; }
.h25 { height: 25px; }
.h23 { height: 23px; }
.t-row.alt { background: #f5f5f5; }
.t-row.selected { background: linear-gradient(to right, transparent 25px, #d9d9d9 25px); }
.name { width: 187px; flex: none; display: flex; align-items: center; }
.val { padding-left: 5px; }
.ar { width: 11px; height: 8px; flex: none; }
.p0 { padding-left: 8px; gap: 10px; }
.p1 { padding-left: 32px; }
.p1 .ar { margin-right: 11px; }
.p1 .ti { margin-right: 8px; }
.p2 { padding-left: 80px; }
.p3 { padding-left: 57px; }
.p3 .ar { margin-right: 12px; }
.p3 .ti { margin-right: 9px; }
.p4 { padding-left: 105px; }
.p5 { padding-left: 54px; }
.ti { width: 18px; height: 18px; flex: none; }
.ti20 { width: 20px; height: 20px; }
.tree-bar { width: 16px; }
.tree-bar .bar-up { top: 8px; }
.tree-bar .bar-down { bottom: 6px; }
.tree-bar .bar-thumb { margin-top: 31px; height: 250px; background: #cdcdcd; }

.r2 { margin-top: 9px; height: 22px; }
.prop-tools { display: flex; align-items: center; margin-top: 13px; height: 25px; padding-left: 4px; position: relative; }
.prop-filter { width: 517px; border-right: 0; flex: none; }
.plus { width: 28px; height: 28px; margin-left: 5px; flex: none; }
.minus { width: 28px; height: 7px; margin-left: 11px; background: linear-gradient(#e8e8e8, #b8b8b8); border: 1px solid #b3b3b3; border-radius: 2px; flex: none; }
.wrench { width: 27px; height: 27px; margin-left: 10px; flex: none; }
.drop { position: absolute; width: 0; height: 0; border: 4px solid transparent; border-top: 4px solid #111; border-bottom: 0; }
.d-plus { left: 556px; top: 23px; }
.d-wrench { left: 631px; top: 23px; }
.class-line { margin-top: 9px; height: 23px; padding-left: 4px; line-height: 22px; border-left: 1px solid #ddd; border-bottom: 1px solid #c4c4c4; }
.props { margin-top: 2px; height: 223px; background: #fff; border: 1px solid #7f8790; border-width: 0 0 1px 1px; display: flex; overflow: hidden; }
.p-head .col1 { border-right-color: #e8e8e8; }
.p-row { height: 25px; display: flex; align-items: center; background: #ffffdc; border-bottom: 1px solid #dedede; white-space: nowrap; }
.p-row.dark { background: #ffffbf; }
.pn { width: 187px; height: 100%; flex: none; display: flex; align-items: center; padding-left: 9px; gap: 11px; border-right: 1px solid #dedede; }
.pn b { font-weight: 700; }
.pn.noarrow { padding-left: 29px; }
.par { width: 9px; height: 12px; flex: none; }
.pv { padding-left: 4px; }
.prop-bar { width: 16px; }
.prop-bar .bar-up { top: 10px; }
.prop-bar .bar-down { bottom: 7px; }
.prop-bar .bar-thumb { margin-top: 115px; height: 35px; background: #cdcdcd; }

.r3 { margin-top: 6px; }
.act-tools { display: flex; align-items: center; height: 44px; position: relative; padding-left: 13px; flex: none; }
.ai { height: 27px; flex: none; }
.a1 { width: 19px; }
.a2 { width: 27px; margin-left: 12px; }
.a3 { width: 27px; margin-left: 9px; }
.a4 { width: 24px; margin-left: 11px; }
.a5 { width: 29px; margin-left: 10px; }
.d-act { left: 182px; top: 34px; }
.act-filter { position: absolute; left: 411px; top: 13px; width: 224px; border-right: 0; }
.act-table { height: 90px; background: #fff; border: 1px solid #7f8790; border-right: 0; display: flex; flex-direction: column; overflow: hidden; }
.act-head { height: 30px; margin-top: 1px; display: flex; flex: none; white-space: nowrap; }
.act-head span { width: 125px; flex: none; padding-left: 5px; line-height: 28px; border-right: 1px solid #e4e4e4; }
.act-body { flex: 1; }
.hbar { height: 19px; flex: none; background: #f0f0f0; position: relative; }
.hb-left { position: absolute; left: 6px; top: 3px; width: 8px; height: 12px; }
.hb-right { position: absolute; right: 3px; top: 3px; width: 8px; height: 12px; }
.hb-thumb { position: absolute; left: 22px; top: 0; width: 505px; height: 19px; background: #cdcdcd; border-left: 1px solid #111; }
.tabs { display: flex; height: 28px; margin-top: 2px; padding-left: 2px; align-items: flex-start; }
.tab { display: flex; align-items: center; justify-content: center; height: 25px; white-space: nowrap; border-bottom: 1px solid #cfcfcf; }
.t1 { width: 128px; }
.tab.active { width: 108px; height: 28px; background: #fff; border: 1px solid #dcdcdc; padding-top: 2px; }
.t3 { width: 101px; padding-left: 3px; }

/* annotation overlays */
.mark { position: absolute; border: 3px solid #f93a3a; pointer-events: none; }
.m1 { left: 381px; top: 7px; width: 51px; height: 60px; }
.m2 { left: 443px; top: 12px; width: 25px; height: 60px; }
.m3 { left: 561px; top: 195px; width: 300px; height: 77px; }
.m4 { left: 3px; top: 629px; width: 96px; height: 31px; }
.m5 { left: 1326px; top: 171px; width: 36px; height: 41px; }
.m6 { left: 1339px; top: 300px; width: 69px; height: 41px; }
.watermark { position: absolute; left: 1652px; top: 940px; font: 19px/26px "Liberation Sans", "Noto Sans CJK SC", sans-serif; letter-spacing: .6px; color: rgba(130,130,130,.7); white-space: nowrap; }
```
